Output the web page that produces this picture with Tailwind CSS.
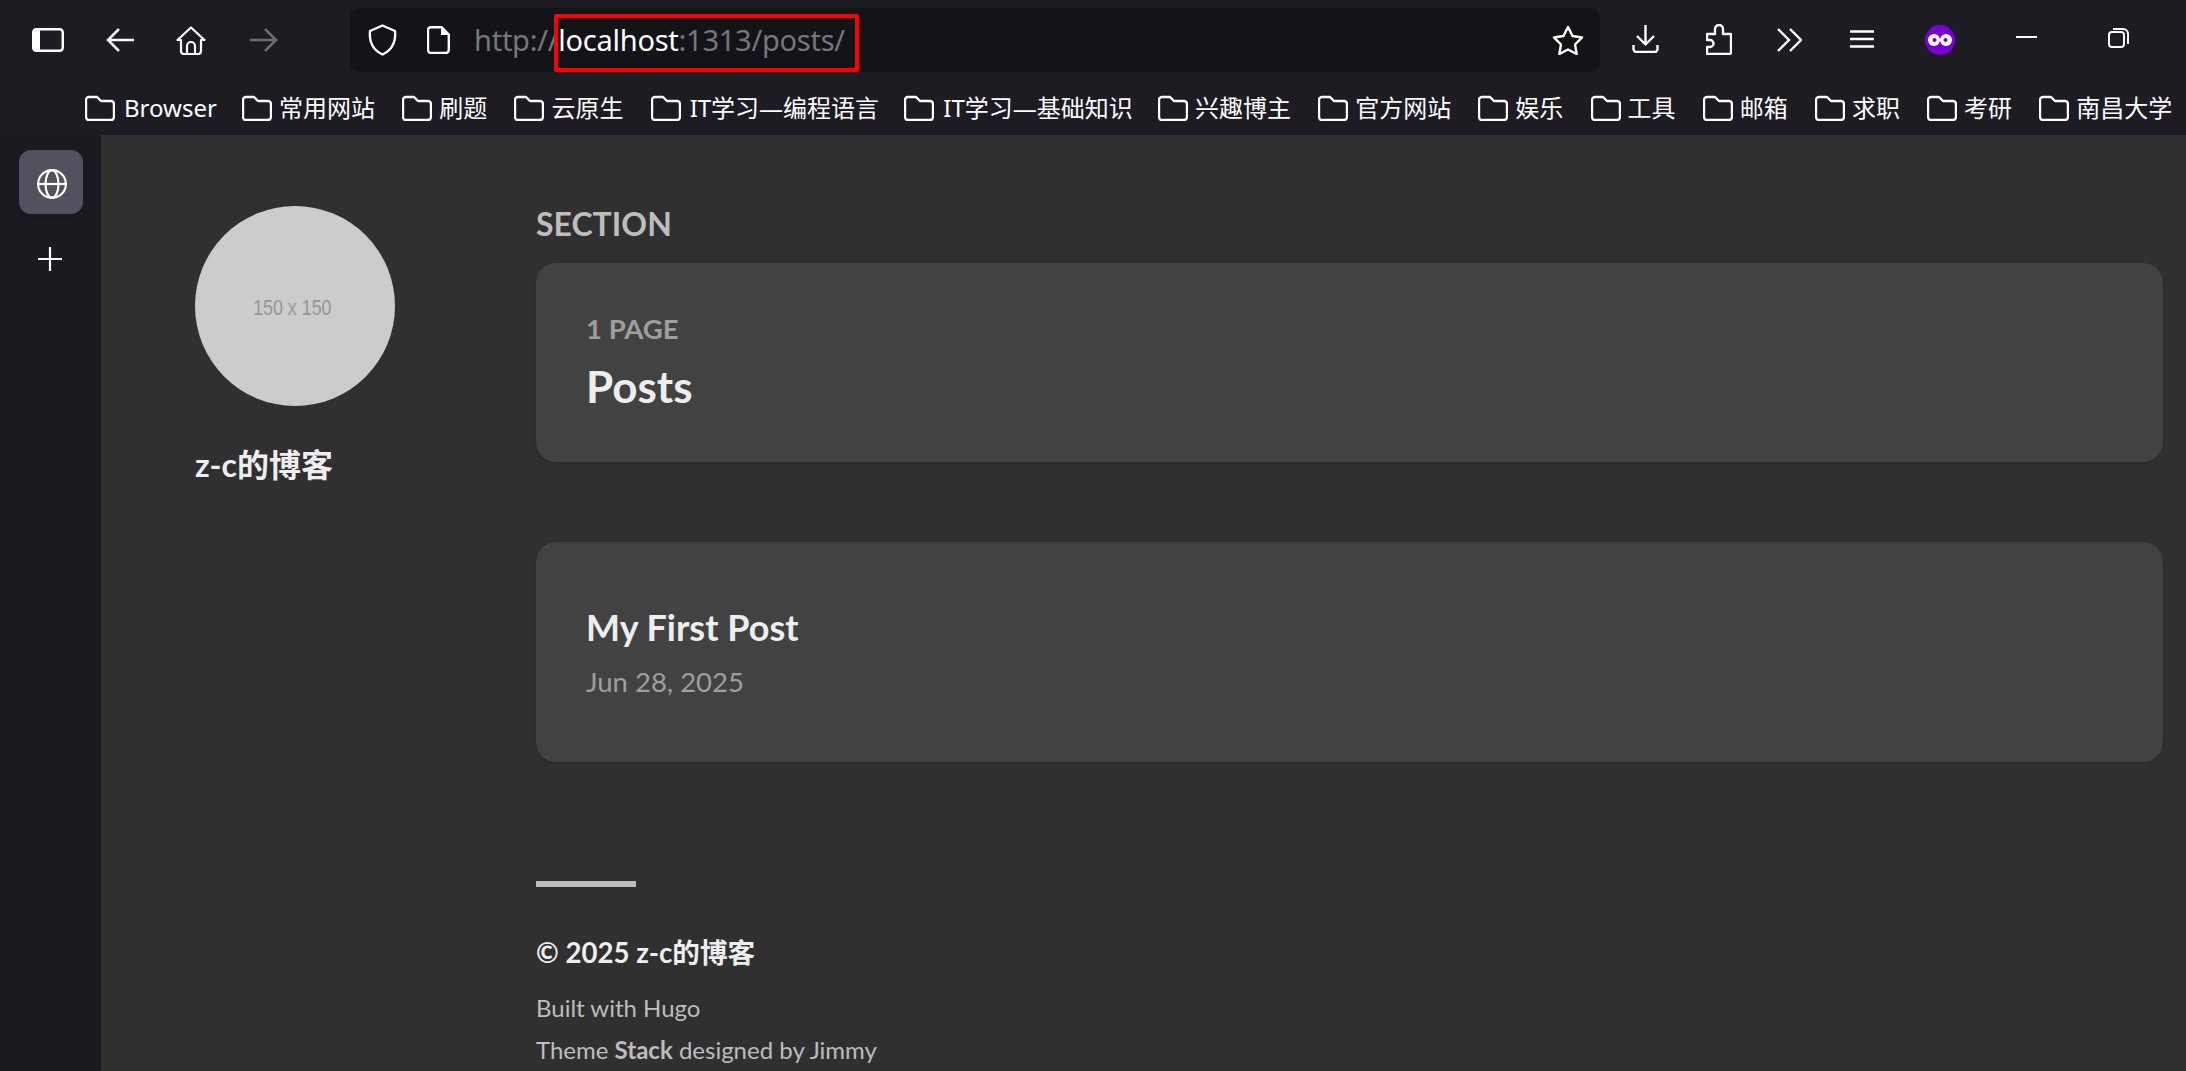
<!DOCTYPE html>
<html lang="zh">
<head>
  <meta charset="UTF-8" />
  <meta name="viewport" content="width=device-width, initial-scale=1.0" />
  <script src="https://cdn.jsdelivr.net/npm/@tailwindcss/browser@4"></script>
  <title>Posts</title>
</head>
<body class="bg-[#1c1c22] h-[1071px] overflow-hidden flex flex-col font-['Lato','Noto_Sans_CJK_SC',sans-serif]">

  <!-- browser toolbar -->
  <header class="h-[80px] flex items-center text-white">
    <div class="w-[350px] shrink-0 flex items-center pl-[32px]">
      <svg class="w-[32px] h-[24px]" viewBox="0 0 32 24"><rect x="1.250" y="1.250" width="29.500" height="21.500" rx="3" fill="none" stroke="white" stroke-width="2.500"/><rect x="1" y="1" width="7" height="22" rx="2" fill="white"/></svg>
      <svg class="w-[28px] h-[24px] ml-[42px]" viewBox="0 0 28 24" fill="none" stroke="white" stroke-width="2.500"><path d="M2 12h26M13 1 2 12l11 11"/></svg>
      <svg class="w-[30px] h-[29px] ml-[42px]" viewBox="0 0 30 29" fill="none" stroke="white" stroke-width="2.200" stroke-linejoin="round"><path d="M15 1.500 1.500 14H5v11a3 3 0 0 0 3 3h14a3 3 0 0 0 3-3V14h3.500zM11 28v-8a4 4 0 0 1 8 0v8"/></svg>
      <svg class="w-[28px] h-[24px] ml-[44px]" viewBox="0 0 28 24" fill="none" stroke="#6f6f72" stroke-width="2.500"><path d="M0 12h26M15 1l11 11-11 11"/></svg>
    </div>

    <div class="relative w-[1250px] shrink-0 h-[64px] bg-[#131318] rounded-[10px] flex items-center pl-[18px]">
      <svg class="w-[29px] h-[32px]" viewBox="0 0 29 32" fill="none" stroke="white" stroke-width="2.400" stroke-linejoin="round"><path d="M14.500 1.500 2 7c-1 11 3 19 12.500 23.500C24 26 28 18 27 7z"/></svg>
      <svg class="w-[23px] h-[28px] ml-[30px]" viewBox="0 0 23 28"><path d="M4 1.200h10.500l7.300 7.300V24a3 3 0 0 1-3 3H4a3 3 0 0 1-3-3V4a3 3 0 0 1 3-2.800z" fill="none" stroke="white" stroke-width="2.400" stroke-linejoin="round"/><path d="M14 1h1l7 7v1h-8z" fill="white"/></svg>
      <p class="ml-[24px] text-[29px] tracking-[-0.25px] font-['Noto_Sans','Noto_Sans_CJK_SC',sans-serif] text-[#77777b]">http://<span class="text-white">localhost</span>:1313/posts/</p>
      <svg class="absolute right-[16px] top-[17px] w-[32px] h-[30px]" viewBox="0 0 32 30" fill="none" stroke="white" stroke-width="2.400" stroke-linejoin="round"><path d="M16 2l4.500 9 9.500 1.500-7 7 1.700 9.500-8.700-4.500-8.700 4.500 1.700-9.500-7-7 9.500-1.500z"/></svg>
      <!-- red annotation box -->
      <div class="absolute left-[204px] top-[6px] w-[305px] h-[58px] border-[4px] border-[#ff0000] rounded-[2px]"></div>
    </div>

    <div class="flex-1 flex items-center pl-[32px]">
      <svg class="w-[27px] h-[29px] -mt-[3px]" viewBox="0 0 27 29" fill="none" stroke="white" stroke-width="2.400" stroke-linejoin="round"><path d="M13.500 1v19M5 12l8.500 8.500L22 12M1.500 21v4a3 3 0 0 0 3 3h18a3 3 0 0 0 3-3v-4"/></svg>
      <svg class="w-[26px] h-[31px] ml-[47px] -mt-[1px]" viewBox="0 0 26 31" fill="none" stroke="white" stroke-width="2.400" stroke-linejoin="round"><path d="M1 10h8V5a4 4 0 0 1 8 0v5h8v18a2 2 0 0 1-2 2H1v-7h3a3.500 3.500 0 0 0 0-7H1z"/></svg>
      <svg class="w-[25px] h-[24px] ml-[45px]" viewBox="0 0 25 24" fill="none" stroke="white" stroke-width="2.400"><path d="M1 1l11 11L1 23M13 1l11 11-11 11"/></svg>
      <svg class="w-[24px] h-[18px] ml-[48px] -mt-[2px]" viewBox="0 0 24 18" stroke="white" stroke-width="2.400"><path d="M0 1.500h24M0 9h24M0 16.500h24"/></svg>
      <svg class="w-[30px] h-[30px] ml-[51px]" viewBox="0 0 30 30"><circle cx="15" cy="15" r="15" fill="#7a00d9"/><circle cx="9" cy="15" r="6" fill="white"/><circle cx="21" cy="15" r="6" fill="white"/><circle cx="9.500" cy="15" r="2" fill="#7a00d9"/><circle cx="20.500" cy="15" r="2" fill="#7a00d9"/></svg>
      <div class="w-[21px] h-[2px] bg-white ml-[61px] -mt-[6px]"></div>
      <svg class="w-[21px] h-[20px] ml-[71px] -mt-[4px]" viewBox="0 0 21 20" fill="none" stroke="white" stroke-width="2"><rect x="1" y="4" width="15" height="15" rx="3"/><path d="M5 1h10a5 5 0 0 1 5 5v10"/></svg>
    </div>
  </header>

  <!-- bookmarks bar -->
  <nav class="h-[55px] flex items-center pl-[85px] gap-[27.200px] text-white text-[24px] whitespace-nowrap font-['Noto_Sans','Noto_Sans_CJK_SC',sans-serif]">
    <a class="flex items-center gap-[9px] -mr-[2px]"><svg class="w-[30px] h-[26px] shrink-0" viewBox="0 0 30 26" fill="none" stroke="white" stroke-width="2.400" stroke-linejoin="round"><path d="M4 2h8l4 4h10a3 3 0 0 1 3 3v13a3 3 0 0 1-3 3H4a3 3 0 0 1-3-3V5a3 3 0 0 1 3-3z"/></svg>Browser</a>
    <a class="flex items-center gap-[7px]"><svg class="w-[30px] h-[26px] shrink-0" viewBox="0 0 30 26" fill="none" stroke="white" stroke-width="2.400" stroke-linejoin="round"><path d="M4 2h8l4 4h10a3 3 0 0 1 3 3v13a3 3 0 0 1-3 3H4a3 3 0 0 1-3-3V5a3 3 0 0 1 3-3z"/></svg>常用网站</a>
    <a class="flex items-center gap-[7px]"><svg class="w-[30px] h-[26px] shrink-0" viewBox="0 0 30 26" fill="none" stroke="white" stroke-width="2.400" stroke-linejoin="round"><path d="M4 2h8l4 4h10a3 3 0 0 1 3 3v13a3 3 0 0 1-3 3H4a3 3 0 0 1-3-3V5a3 3 0 0 1 3-3z"/></svg>刷题</a>
    <a class="flex items-center gap-[7px]"><svg class="w-[30px] h-[26px] shrink-0" viewBox="0 0 30 26" fill="none" stroke="white" stroke-width="2.400" stroke-linejoin="round"><path d="M4 2h8l4 4h10a3 3 0 0 1 3 3v13a3 3 0 0 1-3 3H4a3 3 0 0 1-3-3V5a3 3 0 0 1 3-3z"/></svg>云原生</a>
    <a class="flex items-center gap-[9px] -mr-[2px]"><svg class="w-[30px] h-[26px] shrink-0" viewBox="0 0 30 26" fill="none" stroke="white" stroke-width="2.400" stroke-linejoin="round"><path d="M4 2h8l4 4h10a3 3 0 0 1 3 3v13a3 3 0 0 1-3 3H4a3 3 0 0 1-3-3V5a3 3 0 0 1 3-3z"/></svg>IT学习—编程语言</a>
    <a class="flex items-center gap-[9px] -mr-[2px]"><svg class="w-[30px] h-[26px] shrink-0" viewBox="0 0 30 26" fill="none" stroke="white" stroke-width="2.400" stroke-linejoin="round"><path d="M4 2h8l4 4h10a3 3 0 0 1 3 3v13a3 3 0 0 1-3 3H4a3 3 0 0 1-3-3V5a3 3 0 0 1 3-3z"/></svg>IT学习—基础知识</a>
    <a class="flex items-center gap-[7px]"><svg class="w-[30px] h-[26px] shrink-0" viewBox="0 0 30 26" fill="none" stroke="white" stroke-width="2.400" stroke-linejoin="round"><path d="M4 2h8l4 4h10a3 3 0 0 1 3 3v13a3 3 0 0 1-3 3H4a3 3 0 0 1-3-3V5a3 3 0 0 1 3-3z"/></svg>兴趣博主</a>
    <a class="flex items-center gap-[7px]"><svg class="w-[30px] h-[26px] shrink-0" viewBox="0 0 30 26" fill="none" stroke="white" stroke-width="2.400" stroke-linejoin="round"><path d="M4 2h8l4 4h10a3 3 0 0 1 3 3v13a3 3 0 0 1-3 3H4a3 3 0 0 1-3-3V5a3 3 0 0 1 3-3z"/></svg>官方网站</a>
    <a class="flex items-center gap-[7px]"><svg class="w-[30px] h-[26px] shrink-0" viewBox="0 0 30 26" fill="none" stroke="white" stroke-width="2.400" stroke-linejoin="round"><path d="M4 2h8l4 4h10a3 3 0 0 1 3 3v13a3 3 0 0 1-3 3H4a3 3 0 0 1-3-3V5a3 3 0 0 1 3-3z"/></svg>娱乐</a>
    <a class="flex items-center gap-[7px]"><svg class="w-[30px] h-[26px] shrink-0" viewBox="0 0 30 26" fill="none" stroke="white" stroke-width="2.400" stroke-linejoin="round"><path d="M4 2h8l4 4h10a3 3 0 0 1 3 3v13a3 3 0 0 1-3 3H4a3 3 0 0 1-3-3V5a3 3 0 0 1 3-3z"/></svg>工具</a>
    <a class="flex items-center gap-[7px]"><svg class="w-[30px] h-[26px] shrink-0" viewBox="0 0 30 26" fill="none" stroke="white" stroke-width="2.400" stroke-linejoin="round"><path d="M4 2h8l4 4h10a3 3 0 0 1 3 3v13a3 3 0 0 1-3 3H4a3 3 0 0 1-3-3V5a3 3 0 0 1 3-3z"/></svg>邮箱</a>
    <a class="flex items-center gap-[7px]"><svg class="w-[30px] h-[26px] shrink-0" viewBox="0 0 30 26" fill="none" stroke="white" stroke-width="2.400" stroke-linejoin="round"><path d="M4 2h8l4 4h10a3 3 0 0 1 3 3v13a3 3 0 0 1-3 3H4a3 3 0 0 1-3-3V5a3 3 0 0 1 3-3z"/></svg>求职</a>
    <a class="flex items-center gap-[7px]"><svg class="w-[30px] h-[26px] shrink-0" viewBox="0 0 30 26" fill="none" stroke="white" stroke-width="2.400" stroke-linejoin="round"><path d="M4 2h8l4 4h10a3 3 0 0 1 3 3v13a3 3 0 0 1-3 3H4a3 3 0 0 1-3-3V5a3 3 0 0 1 3-3z"/></svg>考研</a>
    <a class="flex items-center gap-[7px]"><svg class="w-[30px] h-[26px] shrink-0" viewBox="0 0 30 26" fill="none" stroke="white" stroke-width="2.400" stroke-linejoin="round"><path d="M4 2h8l4 4h10a3 3 0 0 1 3 3v13a3 3 0 0 1-3 3H4a3 3 0 0 1-3-3V5a3 3 0 0 1 3-3z"/></svg>南昌大学</a>
  </nav>

  <div class="flex-1 flex min-h-0">
    <!-- browser side panel -->
    <aside class="w-[101px] shrink-0 flex flex-col items-center pt-[15px] bg-[#1a1a20]">
      <div class="w-[64px] h-[64px] rounded-[12px] bg-[#52525e] flex items-center justify-center shadow-md">
        <svg class="w-[30px] h-[30px] ml-[2px] mt-[3px]" viewBox="0 0 30 30" fill="none" stroke="white" stroke-width="2.200"><circle cx="15" cy="15" r="13.900"/><ellipse cx="15" cy="15" rx="6.500" ry="13.900"/><path d="M1 15h28"/></svg>
      </div>
      <svg class="w-[24px] h-[24px] mt-[33px] -ml-[2px]" viewBox="0 0 24 24" stroke="white" stroke-width="2.200"><path d="M12 0v24M0 12h24"/></svg>
    </aside>

    <!-- blog page -->
    <main class="flex-1 flex bg-[#303030] min-w-0">
      <div class="w-[435px] shrink-0 pl-[94px] pt-[71px]">
        <div class="w-[200px] h-[200px] rounded-full bg-[#cccccc] flex items-center justify-center font-['Liberation_Sans',sans-serif] text-[#969696] text-[22px]"><span class="scale-x-[0.81] mt-[3px] -ml-[5px]">150 x 150</span></div>
        <h1 class="mt-[35px] text-[32px] leading-[48px] font-bold text-[#eeeeee]">z-c的博客</h1>
      </div>

      <div class="w-[1627px] shrink-0 pt-[69px]">
        <h2 class="text-[32px] leading-[40px] font-bold text-[#bdbdbd]">SECTION</h2>
        <section class="mt-[19px] h-[199px] rounded-[20px] bg-[#424242] px-[50px] pt-[48px] shadow-sm">
          <p class="text-[27.500px] leading-[36px] font-bold text-[#9e9e9e]">1 PAGE</p>
          <p class="mt-[11px] text-[44px] leading-[56px] font-bold text-[#eeeeee]">Posts</p>
        </section>
        <section class="mt-[80px] h-[220px] rounded-[20px] bg-[#424242] px-[50px] pt-[59px] shadow-sm">
          <p class="text-[36px] leading-[52px] font-bold text-[#eeeeee]">My First Post</p>
          <p class="mt-[7px] text-[27.500px] leading-[44px] text-[#9e9e9e]">Jun 28, 2025</p>
        </section>
        <div class="mt-[119px] w-[100px] h-[6px] bg-[#bdbdbd]"></div>
        <p class="mt-[44px] text-[27.600px] leading-[44px] font-bold text-[#eeeeee]">© 2025 z-c的博客</p>
        <p class="mt-[12px] text-[24px] leading-[42px] text-[#bdbdbd]">Built with Hugo</p>
        <p class="text-[24px] leading-[42px] text-[#bdbdbd]">Theme <b>Stack</b> designed by Jimmy</p>
      </div>
    </main>
  </div>
</body>
</html>
